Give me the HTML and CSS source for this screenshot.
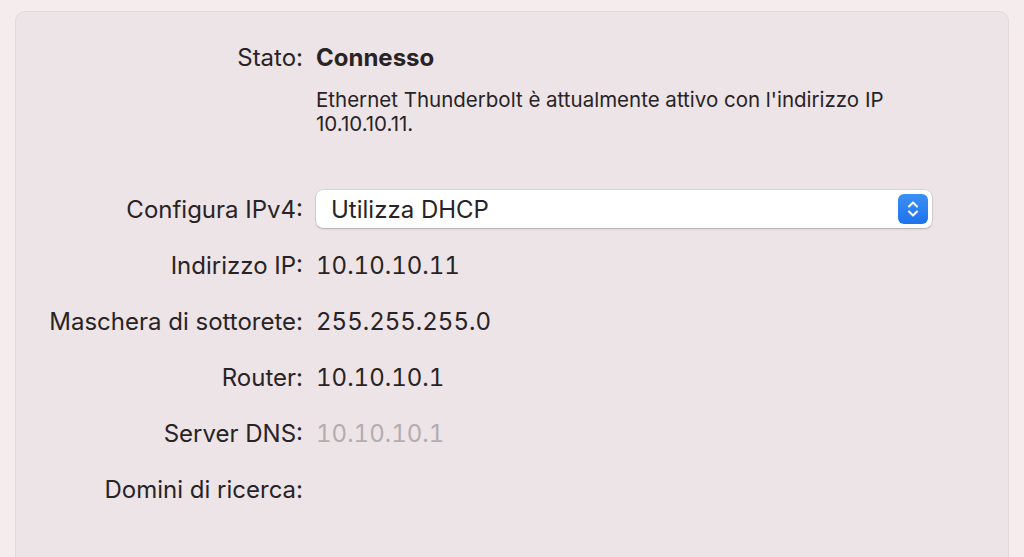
FILE: index.html
```html
<!DOCTYPE html>
<html lang="it">
<head>
    <meta charset="UTF-8">
    <meta name="viewport" content="width=device-width, initial-scale=1.0">
    <title>Ethernet Thunderbolt - TCP/IP</title>
    <link rel="stylesheet" href="styles.css">
</head>
<body>

    <div class="panel">
        <div class="row row-status">
            <div class="label">Stato:</div>
            <div class="value status">Connesso</div>
        </div>

        <div class="row row-desc">
            <div></div>
            <div class="desc">Ethernet Thunderbolt è attualmente attivo con l'indirizzo IP<br>10.10.10.11.</div>
        </div>

        <div class="row">
            <div class="label">Configura IPv4:</div>
            <div class="select">
                <span class="select-text">Utilizza DHCP</span>
                <span class="select-btn">
                    <!-- doppia freccia su/giù -->
                    <svg width="14" height="20" viewBox="0 0 14 20">
                        <path d="M3 7.5 L7 3.5 L11 7.5" fill="none" stroke="#fff" stroke-width="2" stroke-linecap="round" stroke-linejoin="round"/>
                        <path d="M3 12.5 L7 16.5 L11 12.5" fill="none" stroke="#fff" stroke-width="2" stroke-linecap="round" stroke-linejoin="round"/>
                    </svg>
                </span>
            </div>
        </div>

        <div class="row">
            <div class="label">Indirizzo IP:</div>
            <div class="value num">10.10.10.11</div>
        </div>

        <div class="row">
            <div class="label">Maschera di sottorete:</div>
            <div class="value num">255.255.255.0</div>
        </div>

        <div class="row">
            <div class="label">Router:</div>
            <div class="value num">10.10.10.1</div>
        </div>

        <div class="row">
            <div class="label">Server DNS:</div>
            <div class="value num dimmed">10.10.10.1</div>
        </div>

        <div class="row">
            <div class="label">Domini di ricerca:</div>
            <div class="value"></div>
        </div>
    </div>

</body>
</html>
```

FILE: styles.css
```css
body {
    font-family: 'Inter', 'Noto Sans', sans-serif;
    background-color: #f5eced;
    color: #282325;
    margin: 0;
    height: 557px;
    overflow: hidden;
}

.panel {
    margin: 11px 15px 0 15px;
    height: 600px;
    background-color: #ede4e7;
    border: 1px solid #e4dadd;
    border-radius: 10px;
    padding-top: 31px;
    box-sizing: border-box;
}

.row {
    display: grid;
    grid-template-columns: 287px 616px;
    column-gap: 13px;
    align-items: center;
    height: 56px;
    font-size: 24px;
}

.row-status {
    height: 28px;
}

.row-desc {
    height: auto;
    margin-top: 17px;
    margin-bottom: 45px;
}

.label {
    text-align: right;
}

.status {
    font-weight: 700;
}

.num {
    font-variant-numeric: tabular-nums;
}

.desc {
    font-size: 20.5px;
    line-height: 24px;
}

.dimmed {
    color: #b3adb0;
}

.select {
    height: 38px;
    background-color: #fff;
    border-radius: 7px;
    box-shadow: 0 0 0 0.5px rgba(0, 0, 0, 0.12), 0 1px 2px rgba(0, 0, 0, 0.2);
    display: flex;
    align-items: center;
    justify-content: space-between;
    padding: 0 4px 0 15px;
    box-sizing: border-box;
}

.select-btn {
    width: 30px;
    height: 30px;
    border-radius: 6px;
    background: linear-gradient(#3d8ff6, #1e72eb);
    display: flex;
    align-items: center;
    justify-content: center;
}
```
